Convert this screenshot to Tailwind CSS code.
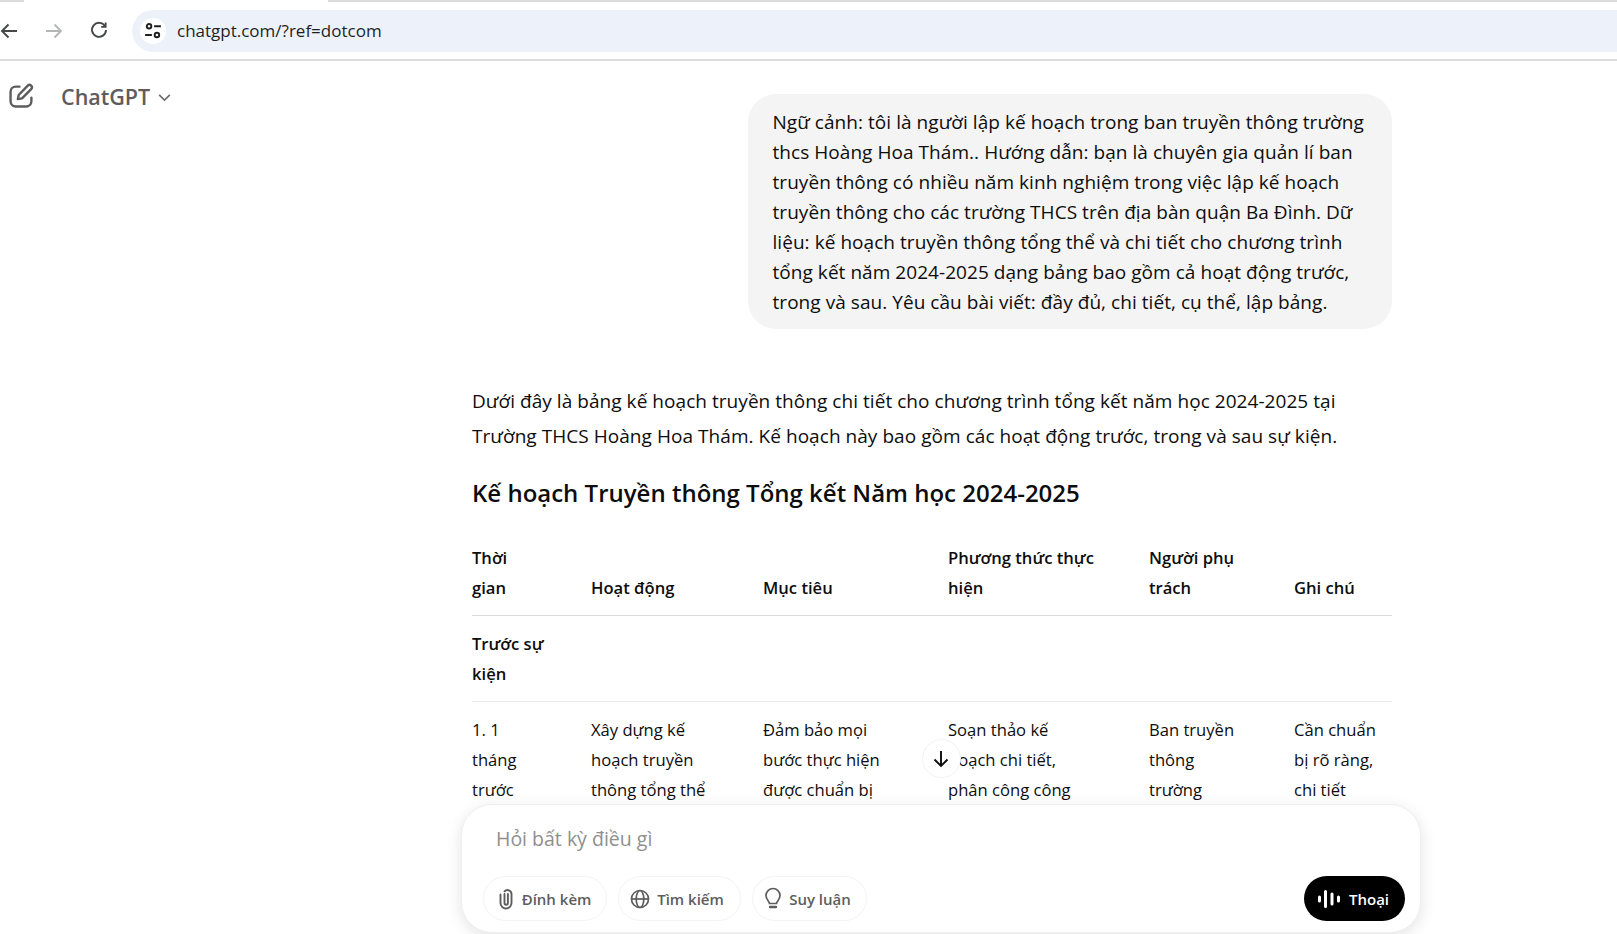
<!DOCTYPE html>
<html lang="vi">
<head>
    <meta charset="UTF-8">
    <title>ChatGPT</title>
    <script src="https://cdn.jsdelivr.net/npm/@tailwindcss/browser@4"></script>
</head>
<body class="bg-white h-screen overflow-hidden relative text-[#0d0d0d] font-['Open_Sans',sans-serif]">
    <!-- browser chrome -->
    <div class="flex h-[2px]">
        <div class="w-[24px] bg-[#dcdcdc]"></div>
        <div class="w-[304px] bg-white"></div>
        <div class="flex-1 bg-[#dcdcdc]"></div>
    </div>
    <div class="h-[57px] flex items-center pt-[1px]">
        <svg class="w-[18px] h-[18px] mt-[-1px]" viewBox="0 0 18 18" fill="none" stroke="#444746" stroke-width="1.9"><path d="M17 9H2M8.5 2.5 2 9l6.500 6.500"/></svg>
        <svg class="w-[18px] h-[18px] ml-[27px] mt-[-1px]" viewBox="0 0 18 18" fill="none" stroke="#b4b5b5" stroke-width="1.8"><path d="M1 9h15M9.500 2.500 16 9l-6.500 6.500"/></svg>
        <svg class="w-[18px] h-[18px] ml-[27px] mt-[-2px]" viewBox="0 0 18 18" fill="none" stroke="#444746" stroke-width="1.9"><path d="M15 5.200A7 7 0 1 0 16 9"/><path d="M15.600 1.500v4.400h-4.400"/></svg>
        <div class="ml-[24px] flex-1 h-[42px] rounded-l-full bg-[#edf2fa] flex items-center pl-[8px]">
            <div class="w-[26px] h-[26px] rounded-full bg-white flex items-center justify-center">
                <svg class="w-[18px] h-[18px]" viewBox="0 0 16 16" fill="none" stroke="#1f1f1f" stroke-width="1.700"><circle cx="4.500" cy="3.800" r="2"/><path d="M9 3.800h6M1 11.500h6"/><circle cx="11.500" cy="11.500" r="2"/></svg>
            </div>
            <span class="ml-[11px] text-[17px] text-[#1f1f1f]">chatgpt.com/?ref=dotcom</span>
        </div>
    </div>
    <div class="h-[2px] bg-[#dcdcdc]"></div>

    <!-- page -->
    <main class="grid grid-cols-[472px_920px]">
        <header class="flex items-start pt-[22px] pl-[9px] text-[#5d5d5d]">
            <svg class="w-[25px] h-[25px]" viewBox="0 0 24 24" fill="none" stroke="#5d5d5d" stroke-width="2.300" stroke-linecap="round" stroke-linejoin="round"><path d="M10 3.500H6.500a5 5 0 0 0-5 5v9a5 5 0 0 0 5 5h10a5 5 0 0 0 5-5V14"/><path d="M8.500 15.500l.8-4L18 2.600a2.200 2.200 0 0 1 3.300 3.200l-8.800 8.900z"/></svg>
            <span class="ml-[27px] mt-[-1px] text-[21.5px] font-semibold leading-[30px]">ChatGPT</span>
            <svg class="w-[15px] h-[15px] ml-[7px] mt-[7px]" viewBox="0 0 14 14" fill="none" stroke="#6b6b6b" stroke-width="1.500"><path d="M2 4.500 7 9.500l5-5"/></svg>
        </header>

        <section>
            <div class="ml-auto mt-[33px] w-[644px] h-[235px] rounded-[28px] bg-[#f4f4f4] pl-[24.5px] py-[13px] text-[19px] tracking-[0.05px] leading-[30px] whitespace-nowrap">
                Ngữ cảnh: tôi là người lập kế hoạch trong ban truyền thông trường<br>
                thcs Hoàng Hoa Thám.. Hướng dẫn: bạn là chuyên gia quản lí ban<br>
                truyền thông có nhiều năm kinh nghiệm trong việc lập kế hoạch<br>
                truyền thông cho các trường THCS trên địa bàn quận Ba Đình. Dữ<br>
                liệu: kế hoạch truyền thông tổng thể và chi tiết cho chương trình<br>
                tổng kết năm 2024-2025 dạng bảng bao gồm cả hoạt động trước,<br>
                trong và sau. Yêu cầu bài viết: đầy đủ, chi tiết, cụ thể, lập bảng.
            </div>

            <p class="mt-[55px] text-[19px] tracking-[0.05px] leading-[35px] whitespace-nowrap">
                Dưới đây là bảng kế hoạch truyền thông chi tiết cho chương trình tổng kết năm học 2024-2025 tại<br>
                Trường THCS Hoàng Hoa Thám. Kế hoạch này bao gồm các hoạt động trước, trong và sau sự kiện.
            </p>

            <h3 class="mt-[21px] text-[24px] font-semibold leading-[36px]">Kế hoạch Truyền thông Tổng kết Năm học 2024-2025</h3>

            <table class="mt-[32px] w-[920px] table-fixed text-[16.6px] leading-[30px]">
                <thead>
                    <tr class="border-b border-[#d9d9d9] align-bottom text-left">
                        <th class="w-[119px] font-semibold pb-[12px]">Thời<br>gian</th>
                        <th class="w-[172px] font-semibold pb-[12px]">Hoạt động</th>
                        <th class="w-[185px] font-semibold pb-[12px]">Mục tiêu</th>
                        <th class="w-[201px] font-semibold pb-[12px]">Phương thức thực<br>hiện</th>
                        <th class="w-[145px] font-semibold pb-[12px]">Người phụ<br>trách</th>
                        <th class="font-semibold pb-[12px]">Ghi chú</th>
                    </tr>
                </thead>
                <tbody>
                    <tr class="border-b border-[#ececec] align-top">
                        <td class="pt-[13px] pb-[12px] font-semibold">Trước sự<br>kiện</td>
                        <td></td><td></td><td></td><td></td><td></td>
                    </tr>
                    <tr class="align-top">
                        <td class="pt-[13px]">1. 1<br>tháng<br>trước</td>
                        <td class="pt-[13px]">Xây dựng kế<br>hoạch truyền<br>thông tổng thể</td>
                        <td class="pt-[13px]">Đảm bảo mọi<br>bước thực hiện<br>được chuẩn bị</td>
                        <td class="pt-[13px]">Soạn thảo kế<br>hoạch chi tiết,<br>phân công công</td>
                        <td class="pt-[13px]">Ban truyền<br>thông<br>trường</td>
                        <td class="pt-[13px]">Cần chuẩn<br>bị rõ ràng,<br>chi tiết</td>
                    </tr>
                </tbody>
            </table>
        </section>
    </main>

    <!-- scroll down button -->
    <div class="absolute left-[922px] top-[739px] w-[39px] h-[39px] rounded-full bg-white border border-[#f2f2f2] flex items-center justify-center">
        <svg class="w-[20px] h-[20px] ml-[-2px]" viewBox="0 0 20 20" fill="none" stroke="#0d0d0d" stroke-width="1.900"><path d="M10 2v15M3.500 10.500 10 17l6.500-6.500"/></svg>
    </div>

    <!-- composer -->
    <div class="absolute left-[461px] top-[804px] w-[960px] h-[129px] rounded-[31px] bg-white border border-[#efefef] shadow-[0_4px_16px_rgba(0,0,0,0.11)] pt-[19px] pl-[21px] pr-[15px]">
        <div class="pl-[13px] text-[19.5px] leading-[30px] text-[#8f8f8f]">Hỏi bất kỳ điều gì</div>
        <div class="mt-[22px] flex items-center">
            <div class="flex items-center justify-center w-[124px] h-[45px] rounded-full border border-[#f3f3f3] text-[15px] font-semibold text-[#5d5d5d]">
                <svg class="w-[18px] h-[22px] mr-[7px] ml-[-2px]" viewBox="0 0 18 22" fill="none" stroke="#5d5d5d" stroke-width="1.900" stroke-linecap="round"><path d="M7.500 6v9a1.700 1.700 0 0 0 3.400 0V6"/><path d="M3.500 6.500V15a5.500 5.500 0 0 0 11 0V6a4 4 0 0 0-7-2.600"/></svg>
                <span class="mt-[1px]">Đính kèm</span>
            </div>
            <div class="ml-[11px] flex items-center justify-center w-[123px] h-[45px] rounded-full border border-[#f3f3f3] text-[15px] font-semibold text-[#5d5d5d]">
                <svg class="w-[20px] h-[20px] mr-[7px] ml-[-5px]" viewBox="0 0 20 20" fill="none" stroke="#5d5d5d" stroke-width="1.700"><circle cx="10" cy="10" r="8.500"/><ellipse cx="10" cy="10" rx="3.800" ry="8.500"/><path d="M1.500 10h17"/></svg>
                <span class="mt-[1px]">Tìm kiếm</span>
            </div>
            <div class="ml-[11px] flex items-center justify-center w-[115px] h-[45px] rounded-full border border-[#f3f3f3] text-[15px] font-semibold text-[#5d5d5d]">
                <svg class="w-[20px] h-[24px] mr-[6px] ml-[-5px]" viewBox="0 0 20 24" fill="none" stroke="#5d5d5d" stroke-width="1.700"><path d="M6.500 16.500c0-2-3.500-3.700-3.500-8a7 7 0 0 1 14 0c0 4.300-3.500 6-3.500 8z"/><path d="M7 20h6" stroke-width="2.400" stroke-linecap="round"/></svg>
                <span class="mt-[1px]">Suy luận</span>
            </div>
            <div class="ml-auto flex items-center justify-center w-[101px] h-[45px] rounded-full bg-black text-white text-[15px] font-semibold">
                <svg class="w-[24px] h-[20px] mr-[8px] ml-[-3px]" viewBox="0 0 24 20" fill="none" stroke="#fff" stroke-width="3" stroke-linecap="round"><path d="M2.500 8v4M8.500 2.500v15M15 5v10M21.500 8v4"/></svg>
                <span class="mt-[1px]">Thoại</span>
            </div>
        </div>
    </div>
</body>
</html>
